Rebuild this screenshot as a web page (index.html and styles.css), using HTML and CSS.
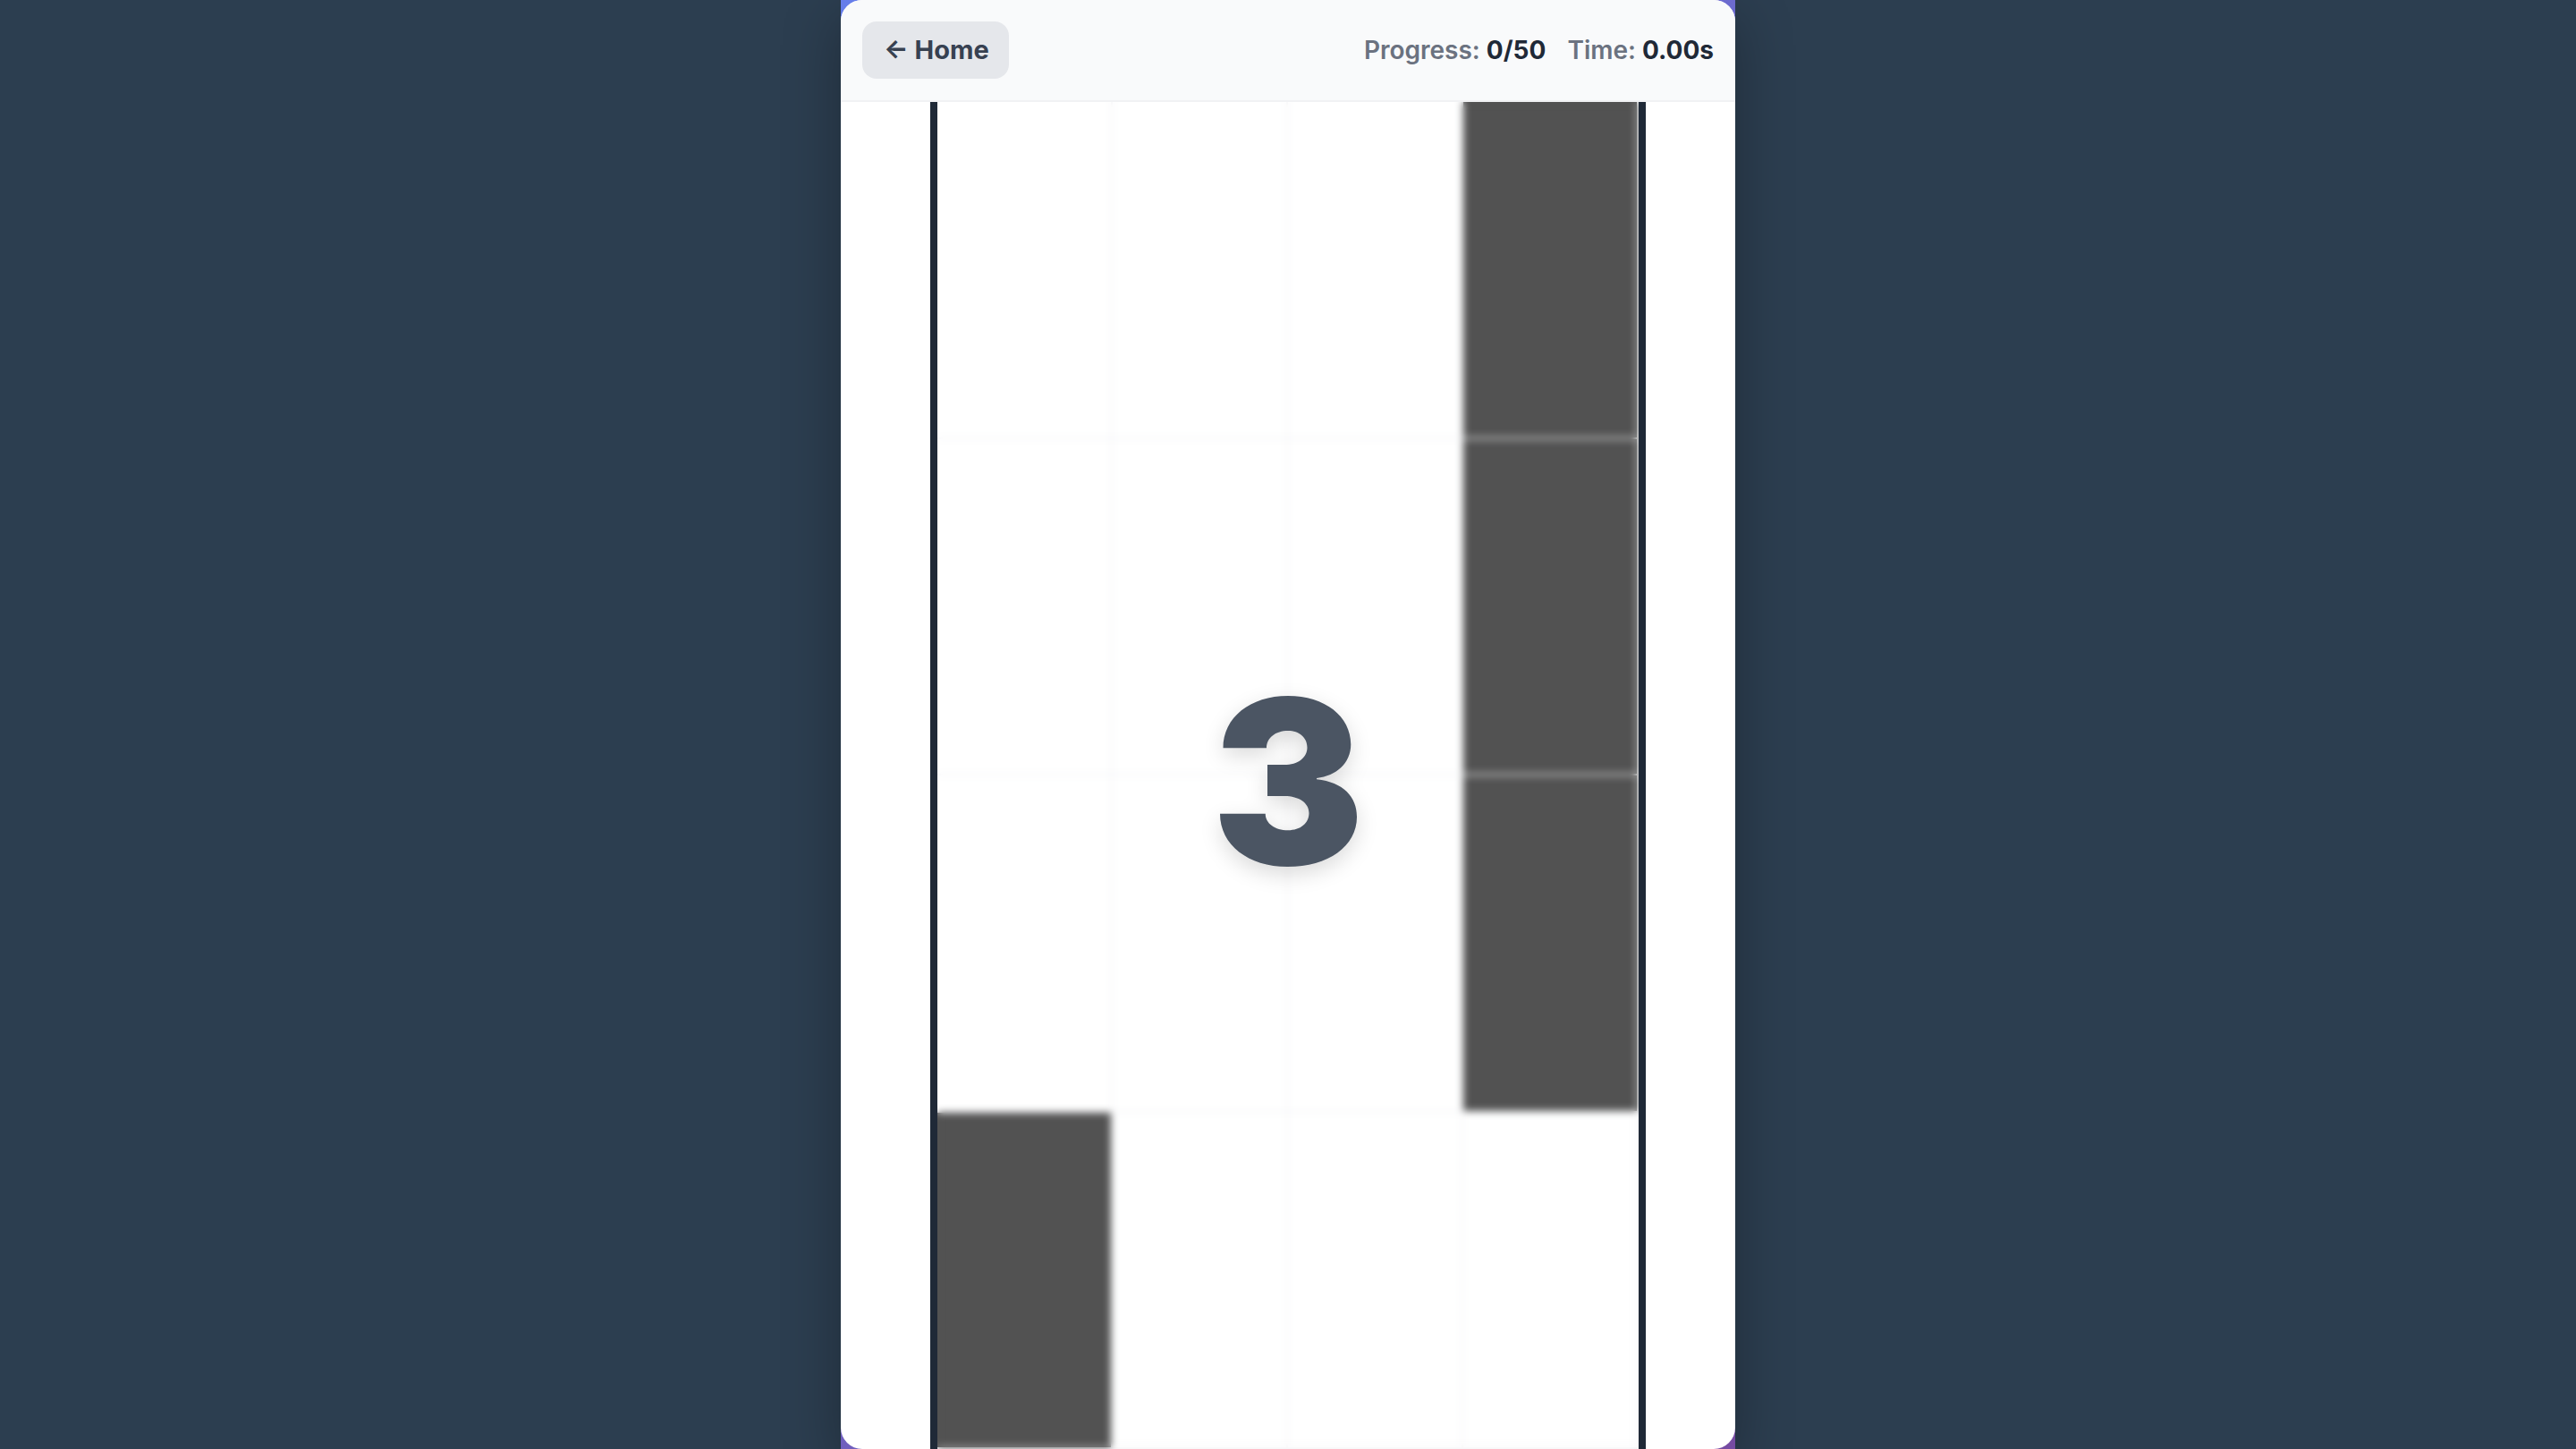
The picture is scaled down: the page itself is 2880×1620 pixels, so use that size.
FILE: index.html
```html
<!DOCTYPE html>
<html lang="en">
<head>
<meta charset="utf-8">
<title>Piano Tiles</title>
<link rel="stylesheet" href="styles.css">
</head>
<body>
  <div class="app">
    <div class="card">
      <header class="header">
        <button class="home-btn">← Home</button>
        <div class="stats">
          <span class="stat">Progress: <b>0/50</b></span>
          <span class="stat">Time: <b>0.00s</b></span>
        </div>
      </header>
      <main class="board-wrap">
        <div class="board">
          <div class="grid">
            <div class="cell"></div><div class="cell"></div><div class="cell"></div><div class="cell tile"></div>
            <div class="cell"></div><div class="cell"></div><div class="cell"></div><div class="cell tile"></div>
            <div class="cell"></div><div class="cell"></div><div class="cell"></div><div class="cell tile"></div>
            <div class="cell tile"></div><div class="cell"></div><div class="cell"></div><div class="cell"></div>
          </div>
          <div class="countdown"><span class="count">3</span></div>
        </div>
      </main>
    </div>
  </div>
</body>
</html>
```

FILE: styles.css
```css
html, body {
  margin: 0;
  padding: 0;
  height: 100%;
}

body {
  background: #2c3e50;
  font-family: Inter, "Noto Sans", "Liberation Sans", sans-serif;
  display: flex;
  justify-content: center;
  overflow: hidden;
}

.app {
  width: 1000px;
  height: 100vh;
  background: linear-gradient(135deg, #667eea 0%, #764ba2 100%);
  box-shadow: 0 20px 60px rgba(0, 0, 0, 0.3);
}

.card {
  height: 100%;
  background: #ffffff;
  border-radius: 24px;
  overflow: hidden;
  display: flex;
  flex-direction: column;
}

.header {
  background: #f9fafb;
  padding: 24px;
  border-bottom: 2px solid #f1f2f4;
  display: flex;
  justify-content: space-between;
  align-items: center;
}

.home-btn {
  font-family: inherit;
  font-size: 29px;
  font-weight: 700;
  line-height: 32px;
  color: #374151;
  background: #e5e7eb;
  border: none;
  border-radius: 16px;
  padding: 16px 22px 16px 24px;
}

.stats {
  display: flex;
  gap: 24px;
  font-size: 28px;
  font-weight: 600;
  color: #6b7280;
}

.stat b {
  font-weight: 700;
  color: #1f2937;
}

.board-wrap {
  flex: 1;
  display: flex;
  justify-content: center;
  min-height: 0;
}

.board {
  width: 784px;
  border-left: 8px solid #1f2937;
  border-right: 8px solid #1f2937;
  position: relative;
  overflow: hidden;
}

.grid {
  height: 100%;
  display: grid;
  grid-template-columns: repeat(4, 1fr);
  grid-template-rows: repeat(4, 1fr);
}

.cell {
  background: #ffffff;
  border-right: 2px solid #f3f4f6;
  border-bottom: 2px solid #f3f4f6;
}

.cell.tile {
  background-color: #525252;
  background-clip: padding-box;
}

.countdown {
  position: absolute;
  inset: 0;
  padding-top: 14px;
  display: flex;
  align-items: center;
  justify-content: center;
  backdrop-filter: blur(4px);
}

.count {
  font-size: 256px;
  font-weight: 900;
  line-height: 1;
  color: #4b5563;
  text-shadow: 0 8px 24px rgba(0, 0, 0, 0.15);
}
```
